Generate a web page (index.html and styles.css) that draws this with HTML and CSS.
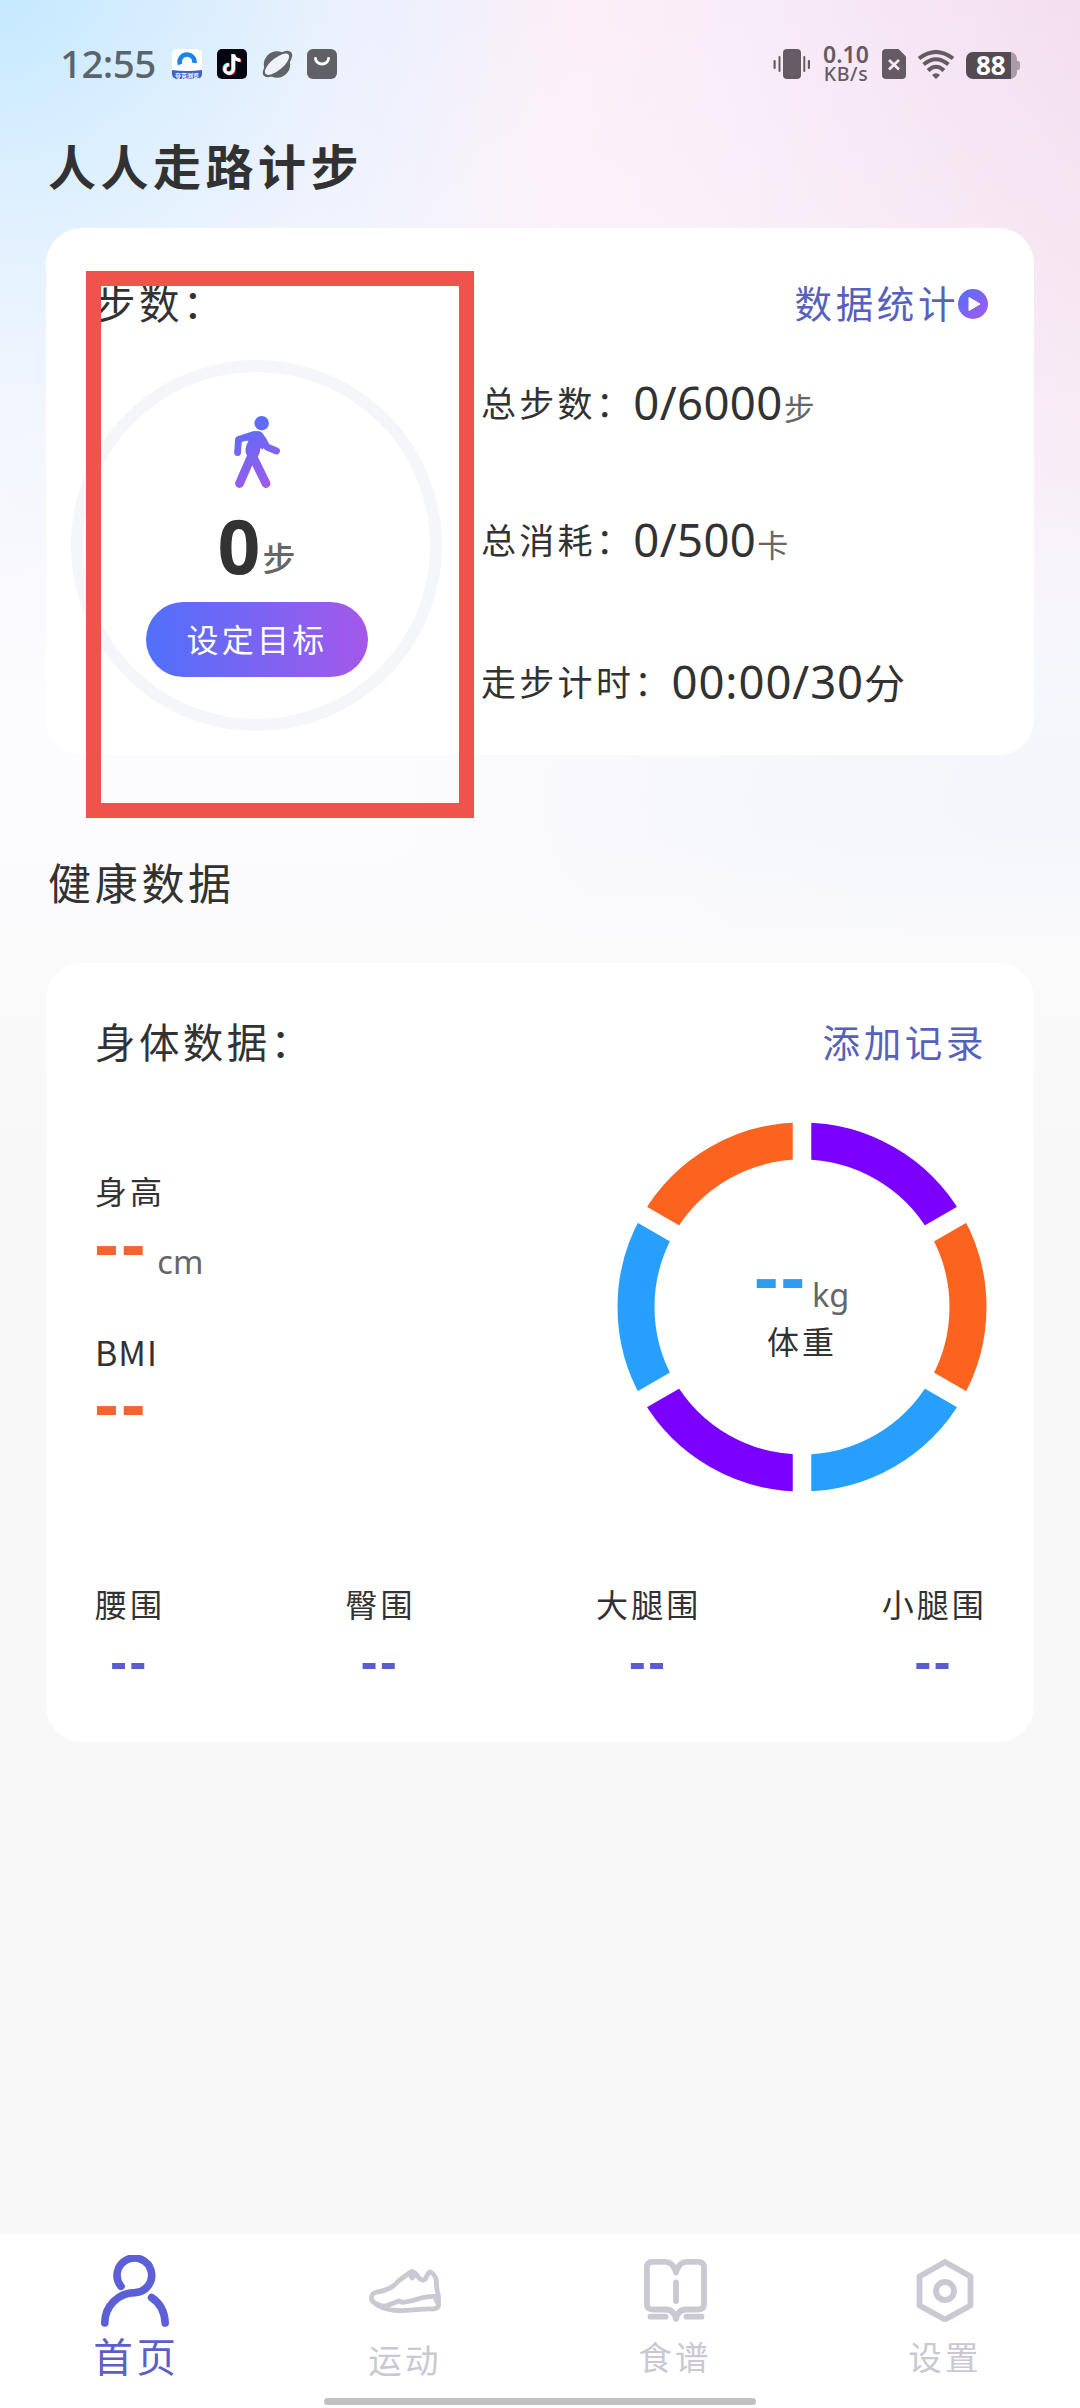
FILE: index.html
```html
<!DOCTYPE html>
<html lang="zh-CN">
<head>
<meta charset="utf-8">
<title>人人走路计步</title>
<link rel="stylesheet" href="styles.css">
</head>
<body>
<div class="screen">
  <header class="status">
    <span class="clock">12:55</span>
    <div class="status-apps">
      <svg width="30" height="30" viewBox="0 0 30 30">
        <defs><clipPath id="app"><rect width="30" height="30" rx="5"/></clipPath></defs>
        <g clip-path="url(#app)">
          <rect width="30" height="30" fill="#fff"/>
          <path d="M8 15.500A7.500 7.500 0 1 1 22.500 14" fill="none" stroke="#1b84e8" stroke-width="4.500"/>
          <path d="M13 16q2-4 6-1l5 1v5H12z" fill="#fff"/>
          <path d="M0 21q15 2 30 0v9H0z" fill="#3a63cf"/>
        </g>
        <text x="15" y="28.500" text-anchor="middle" class="app-caption">夸克浏览</text>
      </svg>
      <svg width="30" height="30" viewBox="0 0 30 30">
        <rect width="30" height="30" rx="5" fill="#03040f"/>
        <g fill="none" stroke-width="3.200">
          <path d="M15.600 5v14.500a4.300 4.300 0 1 1-4.300-4.300M15.600 5q.8 5.500 7 5.800" stroke="#35e6e0"/>
          <path d="M17.200 6v14.500a4.300 4.300 0 1 1-4.300-4.300M17.200 6q.8 5.500 7 5.800" stroke="#f5325c"/>
          <path d="M16.400 5.500V20a4.300 4.300 0 1 1-4.300-4.300M16.400 5.500q.8 5.500 7 5.800" stroke="#fff"/>
        </g>
      </svg>
      <svg width="31" height="30" viewBox="0 0 31 30">
        <circle cx="15" cy="15.500" r="13.200" fill="#606368"/>
        <ellipse cx="15.500" cy="15" rx="18" ry="8" transform="rotate(-40 15.500 15)" fill="#606368"/>
        <ellipse cx="15" cy="15.200" rx="15" ry="6" transform="rotate(-40 15 15.200)" fill="#eef2fc"/>
      </svg>
      <svg width="30" height="30" viewBox="0 0 30 30">
        <rect width="30" height="30" rx="6" fill="#5f6166"/>
        <path d="M8.500 9.500a6.500 5.500 0 0 0 13 0" fill="none" stroke="#fff" stroke-width="2.800" stroke-linecap="round"/>
      </svg>
    </div>
    <div class="status-right">
      <svg width="38" height="30" viewBox="0 0 38 30" fill="#655b65">
        <rect x="10" width="18" height="30" rx="4"/>
        <rect x="5.500" y="7" width="2" height="16" rx="1"/><rect x="0.500" y="11" width="2.200" height="9" rx="1"/>
        <rect x="30.300" y="7" width="2" height="16" rx="1"/><rect x="34.800" y="11" width="2.200" height="9" rx="1"/>
      </svg>
      <div class="speed"><span class="speed-value">0.10</span><span class="speed-unit">KB/s</span></div>
      <svg class="sim" width="24" height="30" viewBox="0 0 24 30">
        <path d="M4 0h12.500L24 7.500V26a4 4 0 0 1-4 4H4a4 4 0 0 1-4-4V4a4 4 0 0 1 4-4z" fill="#655b65"/>
        <path d="M7 11l10 9.500M17 11L7 20.500" stroke="#f8eaf6" stroke-width="2.600"/>
      </svg>
      <svg class="wifi" width="36" height="29" viewBox="0 0 36 29" fill="none" stroke="#655b65" stroke-width="4">
        <path d="M1 8.500Q18-4.500 35 8.500M5.600 14.500Q18 4 30.400 14.500M10 20.500Q18 13 26 20.500"/>
        <path d="M14 25q4-3.500 8 0l-4 4z" fill="#655b65" stroke="none"/>
      </svg>
      <div class="battery"><span>88</span></div>
    </div>
  </header>

  <h1 class="app-title">人人走路计步</h1>

  <section class="card steps">
    <div class="card-head">
      <h2>步数：</h2>
      <a class="link">数据统计
        <svg width="30" height="30" viewBox="0 0 30 30">
          <defs><linearGradient id="play" x1="0" y1="0" x2="1" y2="1"><stop offset="0" stop-color="#4f70fa"/><stop offset="1" stop-color="#a659ec"/></linearGradient></defs>
          <circle cx="15" cy="15" r="15" fill="url(#play)"/><path d="M11 8.500v13L22 15z" fill="#fff" stroke="#fff" stroke-linejoin="round"/>
        </svg>
      </a>
    </div>
    <div class="steps-body">
      <div class="ring">
        <svg width="46" height="72" viewBox="0 0 46 72">
          <defs><linearGradient id="walk" gradientUnits="userSpaceOnUse" x1="5" y1="0" x2="36" y2="74"><stop offset="0" stop-color="#5070fa"/><stop offset="1" stop-color="#a359ea"/></linearGradient></defs>
          <circle cx="27.700" cy="7.200" r="7.200" fill="url(#walk)"/>
          <path d="M3.700 23Q4.500 21 7 20.300L21 15.500Q26.500 13.500 29.500 18.500L34 27L28.500 33.500L26.500 32Q26 38 23.500 41.500L17 43Q11 40 11.500 33Q12.500 28 14.500 25Z" fill="url(#walk)"/>
          <g fill="none" stroke="url(#walk)" stroke-linecap="round" stroke-linejoin="round">
            <path d="M20 18.500L4.500 23.500L3.600 36.500M29 23.500L33 31L42.500 35" stroke-width="6.800"/>
            <path d="M17.500 40L5.500 67.500M18.500 40L32 67.500" stroke-width="8.800"/>
          </g>
        </svg>
        <p class="count"><b>0</b><span>步</span></p>
        <button class="goal">设定目标</button>
      </div>
      <div class="metrics">
        <p class="metric"><span class="label">总步数：</span><span class="num">0/6000</span><span class="unit">步</span></p>
        <p class="metric"><span class="label">总消耗：</span><span class="num">0/500</span><span class="unit">卡</span></p>
        <p class="metric"><span class="label">走步计时：</span><span class="num">00:00/30</span><span class="minutes">分</span></p>
      </div>
    </div>
  </section>

  <h2 class="section-title">健康数据</h2>

  <section class="card body-data">
    <div class="card-head">
      <h2>身体数据：</h2>
      <a class="link">添加记录</a>
    </div>
    <div class="body-main">
      <dl class="vitals">
        <dt>身高</dt>
        <dd><b>--</b><span>cm</span></dd>
        <dt class="bmi">BMI</dt>
        <dd><b>--</b></dd>
      </dl>
      <div class="weight">
        <svg class="weight-ring" width="370" height="370" viewBox="-185 -185 370 370">
          <g fill="none" stroke-width="37">
            <path d="M0-166A166 166 0 0 1 143.760-83" stroke="#7a00ff"/>
            <path d="M143.760-83A166 166 0 0 1 143.760 83" stroke="#fb631f"/>
            <path d="M143.760 83A166 166 0 0 1 0 166" stroke="#279ffc"/>
            <path d="M0 166A166 166 0 0 1-143.760 83" stroke="#7a00ff"/>
            <path d="M-143.760 83A166 166 0 0 1-143.760-83" stroke="#279ffc"/>
            <path d="M-143.760-83A166 166 0 0 1 0-166" stroke="#fb631f"/>
          </g>
          <path d="M0-190V190M-164.500-95L164.500 95M-164.500 95L164.500-95" stroke="#fff" stroke-width="18.500"/>
        </svg>
        <div class="weight-text">
          <p class="weight-value"><b>--</b><span>kg</span></p>
          <p class="weight-label">体重</p>
        </div>
      </div>
    </div>
    <ul class="girths">
      <li><span>腰围</span><b>--</b></li>
      <li><span>臀围</span><b>--</b></li>
      <li><span>大腿围</span><b>--</b></li>
      <li><span>小腿围</span><b>--</b></li>
    </ul>
  </section>

  <nav class="tabs">
    <a class="tab tab-home">
      <svg width="68" height="72" viewBox="0 0 68 72" fill="none" stroke="#5d5fd6" stroke-width="7.600" stroke-linecap="round">
        <path d="M20 31.300A17.300 17.300 0 1 1 34 37.600A30.300 30.300 0 0 0 3.800 68M50.500 42.500Q63.500 51 64.200 68"/>
      </svg>
      <span>首页</span>
    </a>
    <a class="tab tab-sport">
      <svg width="72" height="44" viewBox="0 0 72 44" fill="none" stroke="#cac8d2" stroke-width="4.800" stroke-linejoin="round" stroke-linecap="round">
        <path d="M2.400 28.500Q3 24 8 23C20 21 25 17 30 11.500L42.500 2.400Q46 3 49 7.500Q53 13 56.500 10Q59 2.800 61.500 3Q66.500 6 67.500 12Q67 19 69.500 27L69.700 36Q69 40 63 40C52 39.500 42 42 28 41.500C12 41 2 33 2.400 28.500Z"/>
        <path d="M3 31.500Q8 37 17 37L30 32L34 33.500Q44 32 52 29Q59 27 68 27.500M67 31L69.500 35"/>
        <path d="M40.500 4l2.500 5 3-4" stroke-width="5"/>
      </svg>
      <span>运动</span>
    </a>
    <a class="tab tab-food">
      <svg width="63" height="63" viewBox="0 0 63 63" fill="none" stroke="#cac8d2" stroke-width="5.800" stroke-linecap="round" stroke-linejoin="round">
        <path d="M32 13.500Q29 2.900 21 2.900H9Q2.900 2.900 2.900 8.500V45Q2.900 50.500 9 50.500H22Q30 50.500 32 60Q34 50.500 42 50.500H54Q60 50.500 60 45V8.500Q60 2.900 54 2.900H43Q35 2.900 32 13.500M32 23.500V42"/>
        <path d="M6.500 57.700H21.500M42.500 57.700H57.500"/>
      </svg>
      <span>食谱</span>
    </a>
    <a class="tab tab-settings">
      <svg width="58" height="63" viewBox="0 0 58 63" fill="none" stroke="#cac8d2" stroke-width="5.800" stroke-linejoin="round">
        <path d="M29 3L54.500 17.500V46.500L29 60.500L3.500 46.500V17.500Z"/><circle cx="29" cy="32" r="9"/>
      </svg>
      <span>设置</span>
    </a>
  </nav>
  <div class="home-indicator"></div>
  <div class="highlight"></div>
</div>
</body>
</html>
```

FILE: styles.css
```css
* { box-sizing: border-box; margin: 0; padding: 0; }

body {
  width: 1080px;
  height: 2408px;
  overflow: hidden;
  font-family: "Noto Sans CJK SC", sans-serif;
  color: #323232;
}

svg { display: block; flex: none; }
h1, h2 { font-weight: 400; }
li { list-style: none; }

.clock, .speed, .battery, .num, .count b, .vitals b, .vitals dd span, .weight b, .weight-value span, .girths b {
  font-family: "Noto Sans", "Noto Sans CJK SC", sans-serif;
}

.screen {
  position: relative;
  display: flex;
  flex-direction: column;
  width: 1080px;
  height: 2408px;
  background:
    linear-gradient(180deg, rgba(248, 248, 248, 0) 830px, #fafafb 960px, #f8f8f8 1180px),
    radial-gradient(ellipse 700px 330px at 1080px 800px, #f4f6fb 0, rgba(244, 246, 251, .8) 40%, rgba(244, 246, 251, 0) 100%),
    linear-gradient(180deg, rgba(252, 251, 254, 0) 0, rgba(252, 251, 254, .25) 220px, rgba(252, 251, 254, .55) 480px, #fcfbfe 700px),
    radial-gradient(ellipse 540px 700px at 0 0, #c4e9ff 0, rgba(205, 235, 255, .75) 30%, rgba(225, 241, 255, .4) 65%, rgba(243, 243, 253, 0) 100%),
    linear-gradient(97deg, #f2f4fd 0, #f2f1fc 380px, #fceff8 580px, #f8ecf9 740px, #f3dced 1130px);
}

.status {
  display: flex;
  align-items: center;
  height: 128px;
  padding: 0 60px;
}
.clock { width: 112px; font-size: 38.500px; font-weight: 500; line-height: 50px; letter-spacing: -.6px; color: #5a646e; margin-bottom: 3px; white-space: nowrap; }
.status-apps { display: flex; gap: 15px; }
.status-apps svg:nth-child(3) { margin-right: -1px; }
.app-caption { font-size: 6px; font-weight: 700; fill: #fff; }
.status-right { display: flex; align-items: center; margin-left: auto; color: #655b65; }
.speed { display: flex; flex-direction: column; align-items: center; width: 46px; margin-left: 12px; font-weight: 600; }
.speed-value { font-size: 23px; line-height: 20px; }
.speed-unit { font-size: 19.500px; line-height: 20px; font-weight: 500; letter-spacing: .6px; }
.sim { margin-left: 13px; }
.wifi { margin-left: 12px; }
.battery {
  position: relative;
  width: 51px;
  height: 27px;
  margin: 3px 3px 0 12px;
  border-radius: 7px;
  background: linear-gradient(90deg, #544a54 45px, #a99ca8 45px);
  color: #fff;
  font-size: 26px;
  font-weight: 700;
  line-height: 27px;
  padding-left: 10px;
}
.battery::after {
  content: "";
  position: absolute;
  left: 51px;
  top: 9px;
  width: 3px;
  height: 9px;
  border-radius: 0 2px 2px 0;
  background: #a99ca8;
}

.app-title { height: 100px; padding: 0 48px; font-size: 48px; font-weight: 700; line-height: 72px; letter-spacing: 4.500px; }

.card { margin: 0 46px; border-radius: 36px; background: #fff; }
.card-head { display: flex; justify-content: space-between; align-items: center; height: 48px; }
.card-head h2 { font-size: 40.500px; line-height: 48px; letter-spacing: 3.400px; }
.link { display: flex; align-items: center; font-size: 37.500px; line-height: 48px; letter-spacing: 3.600px; color: #5661bd; }

.steps { height: 527px; padding-top: 50px; }
.steps .card-head { padding: 0 46px 0 49px; }
.steps .link svg { margin: 4px 0 0 -1px; }
.steps-body { display: flex; gap: 39px; margin: 34px 0 0 25px; }
.ring {
  display: flex;
  flex-direction: column;
  align-items: center;
  width: 371px;
  height: 371px;
  padding-top: 44px;
  border: 12px solid #f5f6fa;
  border-radius: 50%;
}
.count { display: flex; align-items: flex-start; height: 114px; line-height: 114px; }
.count b { font-size: 75px; }
.count span { font-size: 33px; font-weight: 500; line-height: 138px; color: #666; margin-left: 2px; }
.goal {
  width: 222px;
  height: 75px;
  border: 0;
  border-radius: 38px;
  background: linear-gradient(90deg, #5070fb, #a558ea);
  color: #fff;
  font: 400 32px/71px "Noto Sans CJK SC", sans-serif;
  letter-spacing: 3.200px;
  padding: 0 0 3px 1px;
}
.metrics { padding-top: 12px; }
.metric { display: flex; align-items: baseline; height: 60px; line-height: 60px; white-space: nowrap; }
.metric + .metric { margin-top: 77px; }
.metric:last-child { margin-top: 82px; }
.metric .label { align-self: flex-start; font-size: 35px; letter-spacing: 3.300px; margin-right: -1px; }
.metric .num { font-size: 45.500px; letter-spacing: .4px; }
.metric .unit { font-size: 31px; color: #666; margin-left: 1px; }
.metric:last-child .num { letter-spacing: .9px; }
.metric .minutes { font-size: 41px; }

.section-title { height: 208px; padding: 92px 48px 0; font-size: 43px; line-height: 68px; letter-spacing: 3.700px; }

.body-data { height: 779px; padding: 54px 47px 0 49px; }
.body-main { display: flex; justify-content: space-between; height: 440px; margin-top: 57px; }
.vitals { padding-top: 43px; }
.vitals dt { font-size: 32px; line-height: 50px; letter-spacing: 3.100px; }
.vitals .bmi { letter-spacing: 1px; font-size: 34px; }
.vitals dd { display: flex; height: 112px; }
.vitals dd b { font-size: 72px; line-height: 54px; letter-spacing: 3.600px; color: #f5642d; }
.vitals dd span { font-size: 32.500px; line-height: 93px; margin-left: 9px; color: #666; }
.vitals .bmi + dd b { line-height: 50px; }
.weight { display: grid; width: 370px; height: 370px; }
.weight > * { grid-area: 1 / 1; }
.weight-text { z-index: 1; padding-top: 125px; }
.weight-value { display: flex; justify-content: center; height: 68px; }
.weight-value b { font-size: 72px; line-height: 56px; letter-spacing: 3.600px; color: #2c9df0; }
.weight-value span { font-size: 32.500px; line-height: 95px; margin-left: 4px; color: #666; }
.weight-label { text-align: center; font-size: 32px; line-height: 50px; letter-spacing: 3.100px; }
.girths { display: flex; justify-content: space-between; margin-top: 16px; }
.girths li { display: flex; flex-direction: column; align-items: center; }
.girths span { font-size: 32px; line-height: 50px; letter-spacing: 3.100px; }
.girths b { font-size: 49px; line-height: 64px; letter-spacing: 3.600px; color: #5a5ccf; }

.tabs { display: flex; flex: none; height: 174px; margin-top: auto; background: #fff; }
.tab { display: flex; flex: 1; flex-direction: column; align-items: center; white-space: nowrap; }
.tab { font-size: 33.500px; line-height: 50px; letter-spacing: 3.200px; color: #cac8d2; }
.tab-home { font-size: 39.500px; letter-spacing: 3.700px; color: #5d5fc4; padding-top: 21px; }
.tab-home span { margin: 3px 0 0 3px; }
.tab-sport { padding-top: 35px; }
.tab-sport span { margin-top: 21px; }
.tab-food, .tab-settings { padding-top: 25px; }
.tab-food span, .tab-settings span { margin-top: 9px; }

.home-indicator { flex: none; width: 432px; height: 7px; margin: -10px auto 3px; border-radius: 4px; background: #c1c1c1; }

/* Annotation frame laid over the steps card */
.highlight { position: absolute; left: 86px; top: 271px; width: 388px; height: 547px; border: 15px solid #ef534b; }
```
